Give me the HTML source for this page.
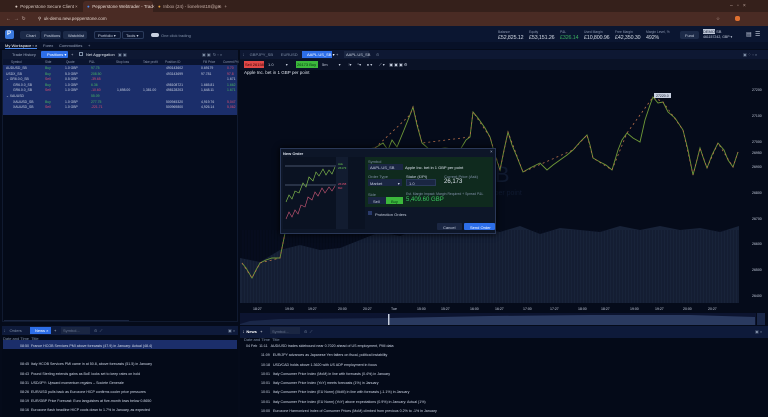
<!DOCTYPE html>
<html><head><meta charset="utf-8"><style>
*{margin:0;padding:0;box-sizing:border-box}
body{width:768px;height:417px;overflow:hidden;background:#050b1a;font-family:"Liberation Sans",sans-serif;color:#c8d0e0;position:relative}
.a{position:absolute;white-space:nowrap}
.t{font-size:4.5px}
.s{font-size:4px}
.v{font-size:5.3px;color:#d8dee8;top:35px;position:absolute;white-space:nowrap;letter-spacing:-0.1px}
</style></head><body>
<!-- browser chrome -->
<div class="a" style="left:0;top:0;width:768px;height:12px;background:#35201b"></div>
<div class="a t" style="left:15px;top:4px;color:#d8c8c0">● &nbsp;Pepperstone Secure Client</div>
<div class="a t" style="left:75px;top:4px;color:#c0a8a0">×</div>
<div class="a" style="left:83px;top:1px;width:70px;height:12px;background:#4a2b24;border-radius:3px 3px 0 0"></div>
<div class="a t" style="left:87px;top:4px;color:#e8d8d0"><span style="color:#4a8af0">●</span> &nbsp;Pepperstone Webtrader - Trad</div>
<div class="a t" style="left:152px;top:4px;color:#c0a8a0">×</div>
<div class="a t" style="left:158px;top:4px;color:#c8b0a8"><span style="color:#e0a040">●</span> &nbsp;Inbox (24) - lionelrest18@gm</div>
<div class="a t" style="left:218px;top:4px;color:#c0a8a0">× &nbsp; +</div>
<div class="a t" style="left:730px;top:3px;color:#c0a8a0;font-size:5px">–&nbsp;&nbsp;&nbsp;▫&nbsp;&nbsp;&nbsp;×</div>
<div class="a" style="left:0;top:12px;width:768px;height:14px;background:#4a2b24"></div>
<div class="a t" style="left:6px;top:16px;color:#c8b0a8;font-size:5px">←&nbsp;&nbsp;→&nbsp;&nbsp;↻</div>
<div class="a t" style="left:38px;top:16px;color:#e0d0c8">⚲ &nbsp;uk-demo.new.pepperstone.com</div>
<div class="a" style="left:735px;top:16px;width:5px;height:5px;background:#e07030;border-radius:2px"></div>
<div class="a t" style="left:716px;top:16px;color:#c8b0a8">☆</div>
<!-- app header -->
<div class="a" style="left:0;top:26px;width:768px;height:16px;background:#0b1631"></div>
<div class="a" style="left:5px;top:30px;width:9px;height:9px;background:#3a7ae0;border-radius:2px"></div>
<div class="a t" style="left:7px;top:31px;color:#fff;font-weight:bold;font-size:6px">P</div>
<div class="a" style="left:20px;top:31px;width:20px;height:8px;background:#1c2a48;border-radius:2px"></div>
<div class="a s" style="left:26px;top:33px">Chart</div>
<div class="a" style="left:41px;top:31px;width:20px;height:8px;background:#1c2a48;border-radius:2px"></div>
<div class="a s" style="left:44px;top:33px">Positions</div>
<div class="a" style="left:63px;top:31px;width:24px;height:8px;background:#1c2a48;border-radius:2px"></div>
<div class="a s" style="left:68px;top:33px">Watchlist</div>
<div class="a" style="left:94px;top:31px;width:27px;height:8px;border:1px solid #2a3a5a;border-radius:2px"></div>
<div class="a s" style="left:98px;top:33px">Portfolio ▾</div>
<div class="a" style="left:122px;top:31px;width:22px;height:8px;border:1px solid #2a3a5a;border-radius:2px"></div>
<div class="a s" style="left:126px;top:33px">Tools ▾</div>
<div class="a" style="left:151px;top:33px;width:8px;height:4px;background:#c8d0e0;border-radius:2px"></div>
<div class="a s" style="left:161px;top:33px;color:#8090a8">One click trading</div>
<div class="a" style="left:498px;top:30px;font-size:3.3px;color:#8a96b0">Balance</div>
<div class="v" style="left:498px">£52,825.12</div>
<div class="a" style="left:529px;top:30px;font-size:3.3px;color:#8a96b0">Equity</div>
<div class="v" style="left:529px">£53,151.26</div>
<div class="a" style="left:560px;top:30px;font-size:3.3px;color:#8a96b0">P&amp;L</div>
<div class="v" style="left:560px;color:#3cb060">£326.14</div>
<div class="a" style="left:584px;top:30px;font-size:3.3px;color:#8a96b0">Used Margin</div>
<div class="v" style="left:584px">£10,800.96</div>
<div class="a" style="left:615px;top:30px;font-size:3.3px;color:#8a96b0">Free Margin</div>
<div class="v" style="left:615px">£42,350.30</div>
<div class="a" style="left:646px;top:30px;font-size:3.3px;color:#8a96b0">Margin Level, %</div>
<div class="v" style="left:646px">492%</div>
<div class="a" style="left:680px;top:31px;width:19px;height:8px;background:#1c2a48;border-radius:2px"></div>
<div class="a s" style="left:685px;top:33px">Fund</div>
<div class="a s" style="left:703px;top:29px;color:#c0c8d8"><span style="background:#c0c8d8;color:#0b1631">DEMO</span> SB</div>
<div class="a" style="left:703px;top:35px;font-size:3.5px">461157242, GBP ▾</div>
<div class="a t" style="left:746px;top:31px;font-size:6px">▤ &nbsp;☰</div>
<!-- workspace tabs -->
<div class="a" style="left:0;top:42px;width:768px;height:7px;background:#081128"></div>
<div class="a s" style="left:5px;top:43px;color:#fff;border-bottom:1px solid #4a8af0">My Workspace ▫ ×</div>
<div class="a s" style="left:43px;top:43px;color:#98a4bc">Forex</div>
<div class="a s" style="left:59px;top:43px;color:#98a4bc">Commodities</div>
<div class="a s" style="left:88px;top:43px;color:#98a4bc">+</div>
<!-- left panel -->
<div class="a" style="left:2px;top:50px;width:236px;height:272px;background:#040a18;border:1px solid #101a30"></div>
<div class="a" style="left:2px;top:50px;width:236px;height:9px;background:#0e1833"></div>
<div class="a s" style="left:12px;top:52px;color:#a0acc4">Trade History</div>
<div class="a" style="left:41px;top:51px;width:27px;height:7px;background:#2d6ee8;border-radius:1px"></div>
<div class="a s" style="left:47px;top:52px;color:#fff">Positions ▾</div>
<div class="a s" style="left:71px;top:52px">+</div>
<div class="a" style="left:79px;top:52px;width:4px;height:4px;border:1px solid #8090a8"></div>
<div class="a s" style="left:86px;top:52px;color:#e0e6f0">Net Aggregation</div>
<div class="a s" style="left:118px;top:52px;color:#8090a8">▣ ▣</div>
<div class="a s" style="left:202px;top:52px;color:#8090a8">▣ ▣ &nbsp;↻ ▫ ×</div>
<div class="a" style="left:3px;top:59px;width:234px;height:6px;background:#0a1430"></div>
<div class="a" style="left:3px;top:65px;width:234px;height:50px;background:#1b2e6a"></div>
<div class="a" style="font-size:3.2px;left:3px;top:60px;width:234px;color:#8a96b0">
<span class="a" style="left:8px">Symbol</span><span class="a" style="left:42px">Side</span><span class="a" style="left:63px">Quote</span><span class="a" style="left:86px">P&amp;L</span><span class="a" style="left:113px">Stop loss</span><span class="a" style="left:140px">Take profit</span><span class="a" style="left:162px">Position ID</span><span class="a" style="left:200px">Fill Price</span><span class="a" style="left:220px">Current Pri</span></div>
<div class="a" style="left:3px;top:66px;width:234px;font-size:3.4px;line-height:5.6px;color:#c8d0e0">
<div style="position:relative;height:5.6px"><span class="a" style="left:3px">AUDUSD_SB</span><span class="a" style="left:42px;color:#4ab860">Buy</span><span class="a" style="left:62px">1.0 GBP</span><span class="a" style="left:88px;color:#4ab860">97.75</span><span class="a" style="left:163px">490143602</span><span class="a" style="left:198px">0.69179</span><span class="a" style="left:224px;color:#e05070">0.70</span></div>
<div style="position:relative;height:5.6px"><span class="a" style="left:3px">USDX_SB</span><span class="a" style="left:42px;color:#4ab860">Buy</span><span class="a" style="left:62px">5.0 GBP</span><span class="a" style="left:88px;color:#4ab860">208.50</span><span class="a" style="left:163px">493143699</span><span class="a" style="left:198px">97.781</span><span class="a" style="left:224px;color:#e05070">97.8</span></div>
<div style="position:relative;height:5.6px"><span class="a" style="left:3px">⌄ GR6.0.0_SB</span><span class="a" style="left:42px;color:#e05070">Sell</span><span class="a" style="left:62px">0.5 GBP</span><span class="a" style="left:88px;color:#e05070">-39.65</span><span class="a" style="left:224px">1.671</span></div>
<div style="position:relative;height:5.6px"><span class="a" style="left:10px">GR6.0.0_SB</span><span class="a" style="left:42px;color:#4ab860">Buy</span><span class="a" style="left:62px">1.0 GBP</span><span class="a" style="left:88px;color:#4ab860">6.36</span><span class="a" style="left:163px">498108721</span><span class="a" style="left:198px">1.665.81</span><span class="a" style="left:224px;color:#4ab860">1.662</span></div>
<div style="position:relative;height:5.6px"><span class="a" style="left:10px">GR6.0.0_SB</span><span class="a" style="left:42px;color:#e05070">Sell</span><span class="a" style="left:62px">1.0 GBP</span><span class="a" style="left:88px;color:#e05070">-10.60</span><span class="a" style="left:114px">1,698.00</span><span class="a" style="left:140px">1,381.00</span><span class="a" style="left:163px">498128203</span><span class="a" style="left:198px">1,648.11</span><span class="a" style="left:224px;color:#4ab860">1.671</span></div>
<div style="position:relative;height:5.6px"><span class="a" style="left:3px">⌄ XAUUSD</span><span class="a" style="left:88px;color:#4ab860">55.09</span></div>
<div style="position:relative;height:5.6px"><span class="a" style="left:10px">XAUUSD_SB</span><span class="a" style="left:42px;color:#4ab860">Buy</span><span class="a" style="left:62px">1.0 GBP</span><span class="a" style="left:88px;color:#4ab860">277.75</span><span class="a" style="left:163px">500945320</span><span class="a" style="left:198px">4,919.76</span><span class="a" style="left:224px;color:#e05070">5,047</span></div>
<div style="position:relative;height:5.6px"><span class="a" style="left:10px">XAUUSD_SB</span><span class="a" style="left:42px;color:#e05070">Sell</span><span class="a" style="left:62px">1.0 GBP</span><span class="a" style="left:88px;color:#e05070">-221.71</span><span class="a" style="left:163px">500969800</span><span class="a" style="left:198px">4,926.14</span><span class="a" style="left:224px;color:#e05070">5,062</span></div>
</div>
<div class="a" style="left:4px;top:320px;width:125px;height:1px;background:#1a2540"></div>
<!-- chart panel -->
<div class="a" style="left:240px;top:50px;width:528px;height:275px;background:#050b1a"></div>
<div class="a" style="left:240px;top:50px;width:528px;height:9px;background:#0e1833"></div>
<div class="a s" style="left:243px;top:52px;color:#8090a8">⁞ &nbsp;&nbsp;&nbsp;&nbsp;GBPJPY_SB &nbsp;&nbsp;&nbsp;&nbsp;&nbsp;&nbsp;EURUSD</div>
<div class="a" style="left:302px;top:51px;width:30px;height:7px;background:#2d6ee8"></div>
<div class="a s" style="left:307px;top:52px;color:#fff">AAPL.US_SB ▾</div>
<div class="a s" style="left:336px;top:52px">+</div>
<div class="a" style="left:344px;top:51px;width:25px;height:7px;background:#1a2642"></div>
<div class="a s" style="left:346px;top:52px">AAPL.US_SB</div>
<div class="a s" style="left:376px;top:52px;color:#8090a8">⊙</div>
<div class="a s" style="left:743px;top:52px;color:#8090a8">▣ ⁘ ▫ ×</div>
<div class="a" style="left:240px;top:59px;width:528px;height:11px;background:#0a1226"></div>
<div class="a" style="left:244px;top:61px;width:20px;height:7px;background:#e04848"></div>
<div class="a s" style="left:245px;top:62px;color:#300">Sell 26158</div>
<div class="a s" style="left:268px;top:62px">1.0 &nbsp;&nbsp;&nbsp;&nbsp;&nbsp;&nbsp;&nbsp;&nbsp;&nbsp;&nbsp;▾</div>
<div class="a" style="left:296px;top:61px;width:22px;height:7px;background:#3cb83c"></div>
<div class="a s" style="left:297px;top:62px;color:#031">26173 Buy</div>
<div class="a s" style="left:322px;top:62px">5m &nbsp;&nbsp;&nbsp;&nbsp;&nbsp;&nbsp;&nbsp;&nbsp;&nbsp;▾ &nbsp;&nbsp;&nbsp;&nbsp;&nbsp;&nbsp;⫶▾ &nbsp;&nbsp;&nbsp;&nbsp;⁺▾ &nbsp;&nbsp;&nbsp;&nbsp;● ▾ &nbsp;&nbsp;&nbsp;&nbsp;&nbsp;⟋ ▾ &nbsp;&nbsp;&nbsp;▣ ▣ ▣ ⚙</div>
<div class="a t" style="left:244px;top:70px;color:#e0e6f0">Apple Inc. bet in 1 GBP per point</div>
<div class="a" style="left:375px;top:162px;font-size:22px;color:#101a30">AAPL.US_SB</div>
<div class="a" style="left:420px;top:190px;font-size:7px;color:#101a30">Apple Inc. bet in 1 GBP per point</div>
<svg class="a" style="left:240px;top:70px" width="528" height="245" viewBox="240 70 528 245">
<polygon fill="#182339" points="240,258 260,262 280,250 300,245 320,250 340,248 380,232 400,236 420,228 440,232 460,230 480,228 500,232 520,226 540,234 560,228 580,230 600,232 620,226 640,230 660,226 680,230 700,228 720,232 739,226 739,303 240,303"/>
<g stroke="#0a1226" stroke-width="0.6">
<path d="M243 230V303M246 230V303M249 230V303M252 230V303M255 230V303M258 230V303M261 230V303M264 230V303M267 230V303M270 230V303M273 230V303M276 230V303M279 230V303M282 230V303M285 230V303M288 230V303M291 230V303M294 230V303M297 230V303M300 230V303M303 230V303M306 230V303M309 230V303M312 230V303M315 230V303M318 230V303M321 230V303M324 230V303M327 230V303M330 230V303M333 230V303M336 230V303M339 230V303M342 230V303M345 230V303M348 230V303M351 230V303M354 230V303M357 230V303M360 230V303M363 230V303M366 230V303M369 230V303M372 230V303M375 230V303M378 230V303M381 230V303M384 230V303M387 230V303M390 230V303M393 230V303M396 230V303M399 230V303M402 230V303M405 230V303M408 230V303M411 230V303M414 230V303M417 230V303M420 230V303M423 230V303M426 230V303M429 230V303M432 230V303M435 230V303M438 230V303M441 230V303M444 230V303M447 230V303M450 230V303M453 230V303M456 230V303M459 230V303M462 230V303M465 230V303M468 230V303M471 230V303M474 230V303M477 230V303M480 230V303M483 230V303M486 230V303M489 230V303M492 230V303M495 230V303M498 230V303M501 230V303M504 230V303M507 230V303M510 230V303M513 230V303M516 230V303M519 230V303M522 230V303M525 230V303M528 230V303M531 230V303M534 230V303M537 230V303M540 230V303M543 230V303M546 230V303M549 230V303M552 230V303M555 230V303M558 230V303M561 230V303M564 230V303M567 230V303M570 230V303M573 230V303M576 230V303M579 230V303M582 230V303M585 230V303M588 230V303M591 230V303M594 230V303M597 230V303M600 230V303M603 230V303M606 230V303M609 230V303M612 230V303M615 230V303M618 230V303M621 230V303M624 230V303M627 230V303M630 230V303M633 230V303M636 230V303M639 230V303M642 230V303M645 230V303M648 230V303M651 230V303M654 230V303M657 230V303M660 230V303M663 230V303M666 230V303M669 230V303M672 230V303M675 230V303M678 230V303M681 230V303M684 230V303M687 230V303M690 230V303M693 230V303M696 230V303M699 230V303M702 230V303M705 230V303M708 230V303M711 230V303M714 230V303M717 230V303M720 230V303M723 230V303M726 230V303M729 230V303M732 230V303M735 230V303M738 230V303"/></g>
<polyline fill="none" stroke="#6f9a38" stroke-width="0.9" points="242,263 246,268 252,278 256,270 260,263 266,260 272,258 280,258 285,233 290,200 300,175 310,160 320,170 340,150 360,150 375,148 383,143 388,150 392,140 397,147 404,130 410,115 413,107 417,125 422,143 430,150 445,148 460,150 466,140 470,137 473,112 478,118 485,128 490,137 495,155 500,170 504,150 508,132 512,145 517,157 523,172 530,168 540,163 547,170 553,165 560,160 567,155 573,150 580,142 587,135 590,145 593,158 600,162 606,165 612,170 618,150 622,140 627,133 633,138 640,142 645,120 650,105 653,97 658,103 663,102 668,112 675,118 683,130 688,150 693,175 697,160 700,148 704,160 707,168 712,155 718,143 724,150 728,160 733,167 736,158 738,152"/>
<polyline fill="none" stroke="#b8704a" stroke-width="0.8" stroke-dasharray="2 3" points="242,263 252,278 260,263 280,258 285,233 410,115 413,107 422,143 470,137 473,112 490,137 500,170 508,132 523,172 573,150 587,135 593,158 612,170 627,133 653,97 663,102 683,130 693,175 700,148 707,168 718,143 733,167 738,152"/>
<rect x="654" y="93" width="17" height="5" fill="#c8d0e0"/>
<text x="656" y="97" font-size="3.5" fill="#0a1226" font-family="Liberation Sans">27220.0</text>
<g font-size="3.5" fill="#c8d0e0" font-family="Liberation Sans">
<text x="752" y="91">27200</text><text x="752" y="117">27100</text><text x="752" y="143">27000</text><text x="752" y="154">26950</text><text x="752" y="168">26900</text><text x="752" y="194">26800</text><text x="752" y="220">26700</text><text x="752" y="245">26600</text><text x="752" y="271">26500</text><text x="752" y="297">26400</text>
<text x="253" y="310">18:27</text><text x="285" y="310">19:00</text><text x="308" y="310">19:27</text><text x="338" y="310">20:00</text><text x="363" y="310">20:27</text><text x="391" y="310">Tue</text><text x="417" y="310">15:00</text><text x="441" y="310">15:27</text><text x="470" y="310">16:00</text><text x="495" y="310">16:27</text><text x="523" y="310">17:00</text><text x="550" y="310">17:27</text><text x="578" y="310">18:00</text><text x="601" y="310">18:27</text><text x="630" y="310">19:00</text><text x="655" y="310">19:27</text><text x="683" y="310">20:00</text><text x="708" y="310">20:27</text>
</g>
</svg>
<!-- navigator -->
<div class="a" style="left:240px;top:313px;width:516px;height:12px;background:#0c1430"></div>
<svg class="a" style="left:240px;top:313px" width="516" height="12"><polygon fill="#2a3a60" points="150,5 250,3 350,2 450,2 515,4 515,12 150,12"/><polygon fill="#1a2748" points="0,11 10,8 40,6 150,5 150,12 0,12"/><rect x="148" y="1" width="1.5" height="11" fill="#c8d0e0"/></svg>
<div class="a" style="left:757px;top:313px;width:8px;height:12px;background:#1a2748"></div>
<!-- bottom left panel -->
<div class="a" style="left:2px;top:326px;width:236px;height:91px;background:#040a18"></div>
<div class="a" style="left:2px;top:326px;width:236px;height:9px;background:#0e1a3a"></div>
<div class="a s" style="left:4px;top:328px;color:#8090a8">⁞ &nbsp;&nbsp;&nbsp;Orders</div>
<div class="a" style="left:30px;top:327px;width:21px;height:7px;background:#2d6ee8"></div>
<div class="a s" style="left:35px;top:328px;color:#fff">News ×</div>
<div class="a s" style="left:54px;top:328px">+</div>
<div class="a" style="left:61px;top:327px;width:29px;height:7px;background:#1a2642"></div>
<div class="a s" style="left:63px;top:328px;color:#6a7690">Symbol...</div>
<div class="a s" style="left:94px;top:328px;color:#8090a8">⊙ &nbsp;⟋</div>
<div class="a s" style="left:228px;top:328px;color:#8090a8">▣ ×</div>
<div class="a s" style="left:3px;top:336px;color:#8090a8">Date and Time &nbsp;Title</div>
<div class="a" style="left:3px;top:340px;width:234px;height:9px;background:#1b2e6a"></div>
<div class="a" style="left:20px;top:342px;font-size:3.6px;line-height:9.2px;color:#d0d8e8">
<div>08:50 &nbsp;France HCOB Services PMI above forecasts (47.9) in January: Actual (48.4)</div>
<div>&nbsp;</div>
<div>08:45 &nbsp;Italy HCOB Services PMI came in at 50.8, above forecasts (51.5) in January</div>
<div>08:43 &nbsp;Pound Sterling extends gains as BoE looks set to keep rates on hold</div>
<div>08:31 &nbsp;USD/JPY: Upward momentum regains – Societe Generale</div>
<div>08:26 &nbsp;EUR/USD pulls back as Eurozone HICP confirms cooler price pressures</div>
<div>08:19 &nbsp;EUR/GBP Price Forecast: Euro languishes at five-month lows below 0.8650</div>
<div>08:16 &nbsp;Eurozone flash headline HICP cools down to 1.7% in January, as expected</div>
</div>
<!-- bottom right panel -->
<div class="a" style="left:240px;top:326px;width:528px;height:91px;background:#040a18"></div>
<div class="a" style="left:240px;top:326px;width:528px;height:12px;background:#0e1a3a"></div>
<div class="a s" style="left:243px;top:329px;color:#fff">⁞ &nbsp;<b>News</b> &nbsp;&nbsp;+</div>
<div class="a" style="left:270px;top:327px;width:30px;height:7px;background:#1a2642"></div>
<div class="a s" style="left:272px;top:329px;color:#6a7690">Symbol...</div>
<div class="a s" style="left:304px;top:329px;color:#8090a8">⊙ &nbsp;⟋</div>
<div class="a s" style="left:755px;top:329px;color:#8090a8">▣ ×</div>
<div class="a s" style="left:244px;top:337px;color:#8090a8">Date and Time &nbsp;Title</div>
<div class="a" style="left:246px;top:342px;font-size:3.6px;line-height:9.3px;color:#d0d8e8">
<div>04 Feb &nbsp;11:11 &nbsp;&nbsp;AUD/USD trades sidebound near 0.7020 ahead of US employment, PMI data</div>
<div>&nbsp;&nbsp;&nbsp;&nbsp;&nbsp;&nbsp;&nbsp;&nbsp;&nbsp;&nbsp;&nbsp;&nbsp;&nbsp;&nbsp;&nbsp;11:09 &nbsp;&nbsp;EUR/JPY advances as Japanese Yen falters on fiscal, political instability</div>
<div>&nbsp;&nbsp;&nbsp;&nbsp;&nbsp;&nbsp;&nbsp;&nbsp;&nbsp;&nbsp;&nbsp;&nbsp;&nbsp;&nbsp;&nbsp;10:18 &nbsp;&nbsp;USD/CAD holds above 1.3620 with US ADP employment in focus</div>
<div>&nbsp;&nbsp;&nbsp;&nbsp;&nbsp;&nbsp;&nbsp;&nbsp;&nbsp;&nbsp;&nbsp;&nbsp;&nbsp;&nbsp;&nbsp;10:01 &nbsp;&nbsp;Italy Consumer Price Index (MoM) in line with forecasts (0.4%) in January</div>
<div>&nbsp;&nbsp;&nbsp;&nbsp;&nbsp;&nbsp;&nbsp;&nbsp;&nbsp;&nbsp;&nbsp;&nbsp;&nbsp;&nbsp;&nbsp;10:01 &nbsp;&nbsp;Italy Consumer Price Index (YoY) meets forecasts (1%) in January</div>
<div>&nbsp;&nbsp;&nbsp;&nbsp;&nbsp;&nbsp;&nbsp;&nbsp;&nbsp;&nbsp;&nbsp;&nbsp;&nbsp;&nbsp;&nbsp;10:01 &nbsp;&nbsp;Italy Consumer Price Index (EU Norm) (MoM) in line with forecasts (-1.1%) in January</div>
<div>&nbsp;&nbsp;&nbsp;&nbsp;&nbsp;&nbsp;&nbsp;&nbsp;&nbsp;&nbsp;&nbsp;&nbsp;&nbsp;&nbsp;&nbsp;10:01 &nbsp;&nbsp;Italy Consumer Price Index (EU Norm) (YoY) above expectations (0.9%) in January: Actual (1%)</div>
<div>&nbsp;&nbsp;&nbsp;&nbsp;&nbsp;&nbsp;&nbsp;&nbsp;&nbsp;&nbsp;&nbsp;&nbsp;&nbsp;&nbsp;&nbsp;10:00 &nbsp;&nbsp;Eurozone Harmonized Index of Consumer Prices (MoM) climbed from previous 0.2% to -1% in January</div>
</div>
<!-- New Order dialog -->
<div class="a" style="left:280px;top:148px;width:216px;height:86px;background:#0d1628;border:1px solid #2a3858;box-shadow:0 0 6px #000"></div>
<div class="a s" style="left:283px;top:151px;color:#e0e6f0;font-weight:bold">New Order</div>
<div class="a t" style="left:490px;top:149px;color:#a0acc4">×</div>
<div class="a" style="left:283px;top:157px;width:82px;height:72px;background:#0a1222"></div>
<svg class="a" style="left:283px;top:157px" width="82" height="72">
<rect x="53" y="0" width="12" height="72" fill="#121c30"/>
<line x1="2" y1="9" x2="53" y2="9" stroke="#8090b0" stroke-width="0.5"/>
<line x1="2" y1="28" x2="53" y2="28" stroke="#8090b0" stroke-width="0.5"/>
<polyline fill="none" stroke="#8cc850" stroke-width="0.6" points="3,45 6,38 9,42 12,34 16,36 20,26 23,30 26,20 30,24 33,15 36,19 40,12 43,18 46,13 49,17 52,10"/>
<polyline fill="none" stroke="#d05a78" stroke-width="0.6" points="3,62 6,55 9,60 12,53 15,57 18,48 22,50 25,40 29,43 32,35 35,39 39,31 42,36 46,30 49,34 52,29"/>
<text x="55" y="8" font-size="3" fill="#6ac850" font-family="Liberation Sans">Ask</text>
<text x="55" y="12" font-size="3" fill="#6ac850" font-family="Liberation Sans">26173</text>
<text x="55" y="28" font-size="3" fill="#e05070" font-family="Liberation Sans">26158</text>
<text x="55" y="32" font-size="3" fill="#e05070" font-family="Liberation Sans">Bid</text>
</svg>
<div class="a" style="left:365px;top:157px;width:128px;height:50px;background:#0f2a1e"></div>
<div class="a s" style="left:368px;top:159px;color:#8090a8">Symbol</div>
<div class="a" style="left:368px;top:164px;width:35px;height:6px;background:#1a2642"></div>
<div class="a s" style="left:370px;top:165px">AAPL.US_SB</div>
<div class="a s" style="left:405px;top:165px;color:#e0e6f0">Apple Inc. bet in 1 GBP per point</div>
<div class="a s" style="left:368px;top:174px;color:#8090a8">Order Type</div>
<div class="a" style="left:368px;top:179px;width:34px;height:7px;background:#1a2642"></div>
<div class="a s" style="left:370px;top:181px">Market &nbsp;&nbsp;&nbsp;&nbsp;&nbsp;&nbsp;&nbsp;&nbsp;&nbsp;&nbsp;&nbsp;&nbsp;&nbsp;▾</div>
<div class="a s" style="left:406px;top:174px;color:#c8d0e0">Stake (£/Pt)</div>
<div class="a" style="left:406px;top:179px;width:30px;height:7px;background:#1a2642;border:1px solid #2a3a5a"></div>
<div class="a s" style="left:409px;top:181px">1.0</div>
<div class="a s" style="left:444px;top:174px;color:#8090a8">Current Price (Ask)</div>
<div class="a" style="left:444px;top:179px;font-size:6px;color:#e0e6f0">26,173</div>
<div class="a s" style="left:368px;top:192px;color:#8090a8">Side</div>
<div class="a" style="left:368px;top:197px;width:18px;height:7px;background:#1a2642"></div>
<div class="a s" style="left:373px;top:199px">Sell</div>
<div class="a" style="left:386px;top:197px;width:17px;height:7px;background:#3cb83c"></div>
<div class="a s" style="left:391px;top:199px;color:#031">Buy</div>
<div class="a" style="left:406px;top:192px;font-size:3.4px;color:#8090a8">Est. Margin Impact: Margin Required + Spread P&amp;L</div>
<div class="a" style="left:406px;top:197px;font-size:6px;color:#3cc860">5,409.60 GBP</div>
<div class="a" style="left:368px;top:211px;width:4px;height:4px;background:#2a3a6a"></div>
<div class="a s" style="left:375px;top:212px;color:#c8d0e0">Protection Orders</div>
<div class="a" style="left:437px;top:223px;width:25px;height:7px;background:#1a2642;border-radius:1px"></div>
<div class="a s" style="left:443px;top:225px">Cancel</div>
<div class="a" style="left:464px;top:223px;width:31px;height:7px;background:#2d6ee8;border-radius:1px"></div>
<div class="a s" style="left:470px;top:225px;color:#fff">Send Order</div>
</body></html>
